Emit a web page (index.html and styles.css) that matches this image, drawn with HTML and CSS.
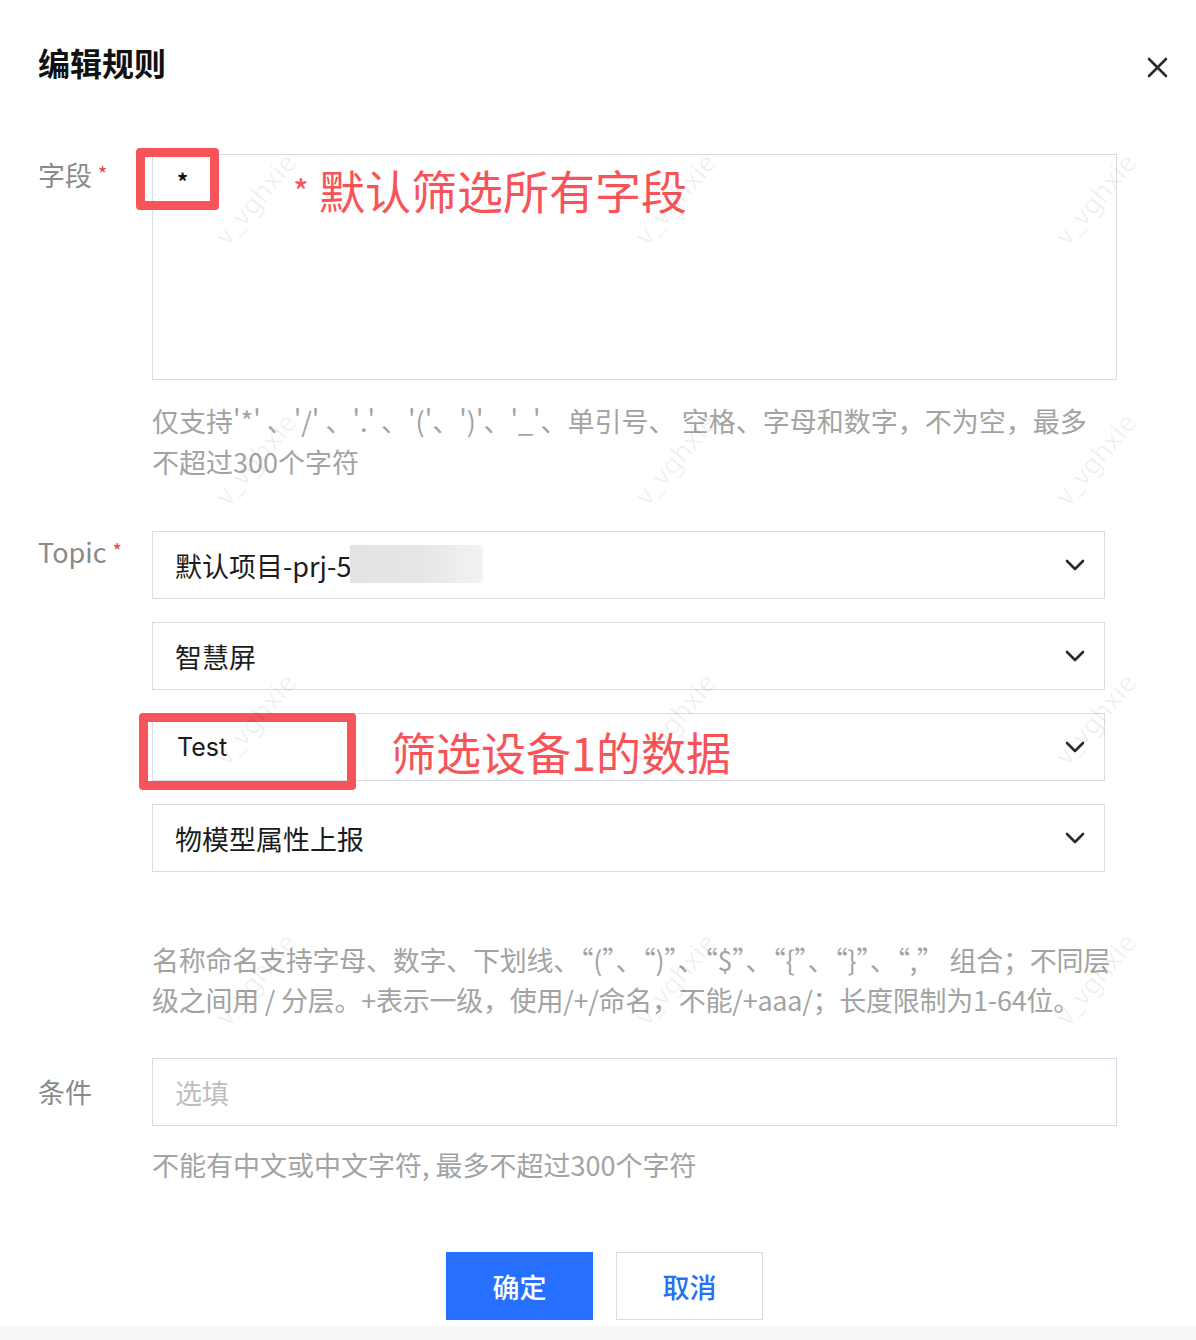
FILE: index.html
```html
<!DOCTYPE html>
<html lang="zh-CN">
<head>
<meta charset="utf-8">
<title>编辑规则</title>
<link rel="stylesheet" href="styles.css">
</head>
<body>
<div class="dialog">
  <div class="header">
    <h1 class="title">编辑规则</h1>
    <button class="close" aria-label="关闭">
      <svg width="21" height="21" viewBox="0 0 21 21"><path d="M2 2 L19 19 M19 2 L2 19" stroke="#2b2b2b" stroke-width="2.6" stroke-linecap="round" fill="none"/></svg>
    </button>
  </div>

  <div class="form">
    <div class="item">
      <div class="label">字段 <span class="req">*</span></div>
      <div class="control">
        <div class="field-wrap">
          <div class="textarea"><span class="ta-value">*</span></div>
          <div class="mark mark-field"></div>
          <div class="note note-field"><span class="note-star">*</span>默认筛选所有字段</div>
        </div>
        <div class="help">仅支持'*' 、'/' 、'.' 、'('、')'、'_'、单引号、 空格、字母和数字，不为空，最多<br>不超过300个字符</div>
      </div>
    </div>

    <div class="item item-topic">
      <div class="label">Topic <span class="req">*</span></div>
      <div class="control">
        <div class="selects">
          <div class="select">
            <span class="sel-text">默认项目-prj-5</span>
            <span class="blur"></span>
            <svg class="chev" width="20" height="12" viewBox="0 0 20 12"><path d="M2 2 L10 10 L18 2" stroke="#2b2b2b" stroke-width="2.6" fill="none" stroke-linecap="round" stroke-linejoin="round"/></svg>
          </div>
          <div class="select">
            <span class="sel-text">智慧屏</span>
            <svg class="chev" width="20" height="12" viewBox="0 0 20 12"><path d="M2 2 L10 10 L18 2" stroke="#2b2b2b" stroke-width="2.6" fill="none" stroke-linecap="round" stroke-linejoin="round"/></svg>
          </div>
          <div class="select">
            <span class="sel-text sel-latin">Test</span>
            <svg class="chev" width="20" height="12" viewBox="0 0 20 12"><path d="M2 2 L10 10 L18 2" stroke="#2b2b2b" stroke-width="2.6" fill="none" stroke-linecap="round" stroke-linejoin="round"/></svg>
            <div class="mark mark-test"></div>
            <div class="note note-test">筛选设备1的数据</div>
          </div>
          <div class="select">
            <span class="sel-text">物模型属性上报</span>
            <svg class="chev" width="20" height="12" viewBox="0 0 20 12"><path d="M2 2 L10 10 L18 2" stroke="#2b2b2b" stroke-width="2.6" fill="none" stroke-linecap="round" stroke-linejoin="round"/></svg>
          </div>
        </div>
        <div class="help help-topic">名称命名支持字母、数字、下划线、“(”、“)”、“$”、“{”、“}”、“,” 组合；不同层<br>级之间用 / 分层。+表示一级，使用/+/命名，不能/+aaa/；长度限制为1-64位。</div>
      </div>
    </div>

    <div class="item item-cond">
      <div class="label label-center">条件</div>
      <div class="control">
        <div class="input"><span class="placeholder">选填</span></div>
        <div class="help help-cond">不能有中文或中文字符, 最多不超过300个字符</div>
      </div>
    </div>

    <div class="actions">
      <button class="btn btn-primary">确定</button>
      <button class="btn btn-default">取消</button>
    </div>
  </div>

  <div class="watermarks" aria-hidden="true">
    <span class="wm" style="left:200px;top:180px">v_vghxie</span>
    <span class="wm" style="left:620px;top:180px">v_vghxie</span>
    <span class="wm" style="left:1040px;top:180px">v_vghxie</span>
    <span class="wm" style="left:200px;top:440px">v_vghxie</span>
    <span class="wm" style="left:620px;top:440px">v_vghxie</span>
    <span class="wm" style="left:1040px;top:440px">v_vghxie</span>
    <span class="wm" style="left:200px;top:700px">v_vghxie</span>
    <span class="wm" style="left:620px;top:700px">v_vghxie</span>
    <span class="wm" style="left:1040px;top:700px">v_vghxie</span>
    <span class="wm" style="left:200px;top:960px">v_vghxie</span>
    <span class="wm" style="left:620px;top:960px">v_vghxie</span>
    <span class="wm" style="left:1040px;top:960px">v_vghxie</span>
  </div>
</div>
</body>
</html>
```

FILE: styles.css
```css
* { box-sizing: border-box; }

html, body {
  margin: 0;
  padding: 0;
  background: #f8f8f9;
}

body {
  font-family: "Noto Sans CJK SC", "Noto Sans", sans-serif;
  color: #1c1c1c;
  width: 1196px;
  height: 1340px;
  overflow: hidden;
}

.dialog {
  position: relative;
  background: #fff;
  width: 1196px;
  height: 1326px;
  padding: 42px 28px 0 38px;
}

.header {
  display: flex;
  justify-content: space-between;
  align-items: center;
  height: 40px;
}

.title {
  margin: 0;
  font-size: 32px;
  line-height: 40px;
  font-weight: 700;
  color: #111;
}

.close {
  border: 0;
  background: none;
  padding: 0;
  width: 21px;
  height: 21px;
  margin-top: 10px;
  display: flex;
}

.form {
  margin-top: 72px;
}

.item {
  display: flex;
}

.label {
  width: 114px;
  flex: none;
  font-size: 27px;
  line-height: 40px;
  margin-top: 0;
  color: #8a8a8a;
  white-space: nowrap;
}

.label-center {
  margin-top: 14px;
}

.req {
  color: #e8453c;
  font-size: 20px;
  vertical-align: 4px;
}

.control {
  flex: none;
  display: flex;
  flex-direction: column;
}

.field-wrap {
  position: relative;
}

.textarea {
  width: 965px;
  height: 226px;
  border: 1px solid #d9dce6;
  background: #fff;
  padding: 10px 0 0 24px;
}

.ta-value {
  font-size: 22px;
  line-height: 30px;
  font-weight: 700;
  display: inline-block;
  color: #111;
}

.mark {
  position: absolute;
  border: 9px solid #f7545a;
  border-radius: 4px;
}

.mark-field {
  left: -16px;
  top: -6px;
  width: 83px;
  height: 62px;
}

.mark-test {
  left: -14px;
  top: -1px;
  width: 217px;
  height: 77px;
}

.note {
  position: absolute;
  color: #f7545a;
  line-height: 46px;
  white-space: nowrap;
}

.note-field {
  left: 141px;
  top: 12px;
  font-size: 46px;
}

.note-star {
  font-size: 34px;
  vertical-align: 4px;
  margin-right: 10px;
}

.note-test {
  left: 238px;
  top: 15px;
  font-size: 45px;
}

.help {
  margin-top: 20px;
  font-size: 27px;
  line-height: 41px;
  color: #a3a3a3;
  white-space: nowrap;
}

.item-topic {
  margin-top: 49px;
}

.selects {
  display: flex;
  flex-direction: column;
  gap: 23px;
}

.select {
  position: relative;
  width: 953px;
  height: 68px;
  border: 1px solid #d9dce6;
  background: #fff;
  display: flex;
  align-items: center;
  padding: 0 19px 0 22px;
}

.sel-text {
  flex: 1;
  font-size: 27px;
  color: #1c1c1c;
  white-space: nowrap;
}

.sel-latin {
  font-family: "Inter", "Noto Sans", sans-serif;
  font-size: 25px;
  padding-left: 2px;
}

.blur {
  position: absolute;
  left: 197px;
  top: 13px;
  width: 133px;
  height: 38px;
  background: linear-gradient(90deg, #e3e3e3 0%, #e6e6e6 55%, #f3f3f3 100%);
  filter: blur(0.6px);
}

.chev {
  flex: none;
  display: block;
}

.help-topic {
  margin-top: 68px;
  line-height: 40px;
  letter-spacing: -0.25px;
}

.item-cond {
  margin-top: 38px;
}

.input {
  width: 965px;
  height: 68px;
  border: 1px solid #d9dce6;
  background: #fff;
  display: flex;
  align-items: center;
  padding-left: 22px;
}

.placeholder {
  font-size: 27px;
  color: #bdbdbd;
}

.help-cond {
  margin-top: 19px;
  line-height: 40px;
}

.actions {
  margin-top: 67px;
  display: flex;
  gap: 23px;
  padding-left: 408px;
}

.btn {
  width: 147px;
  height: 68px;
  font-family: "Noto Sans CJK SC", sans-serif;
  font-size: 27px;
  font-weight: 500;
  border: 1px solid #d9dce6;
  background: #fff;
  color: #2670f5;
  padding: 0;
}

.btn-primary {
  background: #276ffe;
  border-color: #276ffe;
  color: #fff;
}

.watermarks {
  position: absolute;
  inset: 0;
  pointer-events: none;
  overflow: hidden;
}

.wm {
  position: absolute;
  font-family: "Noto Sans", sans-serif;
  font-size: 27px;
  color: rgba(0, 0, 0, 0.06);
  transform: rotate(-50deg);
  transform-origin: center;
  white-space: nowrap;
}
```
